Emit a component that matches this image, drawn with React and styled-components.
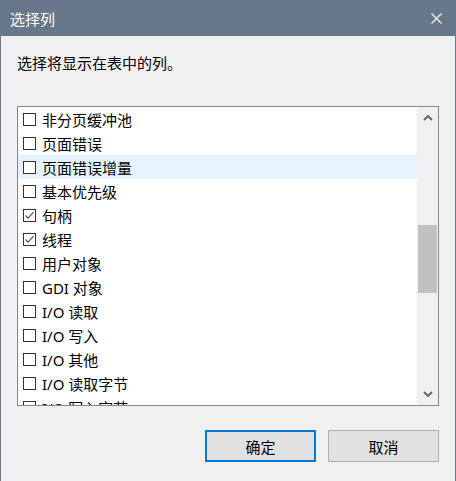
import React from 'react';
import styled, {createGlobalStyle} from 'styled-components';

const GlobalStyle = createGlobalStyle`
  html, body {
    margin: 0;
    padding: 0;
    background: #f0f0f0;
  }
  * {
    box-sizing: border-box;
  }
`;

const Dialog = styled.div`
  width: 456px;
  height: 481px;
  display: flex;
  flex-direction: column;
  background: #f0f0f0;
  border-left: 1px solid #68778a;
  border-right: 1px solid #68778a;
  font-family: "Noto Sans", "Noto Sans CJK SC", sans-serif;
  color: #000;
`;

const TitleBar = styled.div`
  height: 36px;
  flex-shrink: 0;
  display: flex;
  align-items: center;
  justify-content: space-between;
  margin: 0 -1px;
  padding: 0 14px 0 10px;
  background: #68778a;
  color: #fff;
  font-size: 15px;
`;

const CloseButton = styled.div`
  width: 12px;
  height: 12px;
  display: flex;
  align-items: center;
  justify-content: center;
`;

const Body = styled.div`
  flex: 1;
  display: flex;
  flex-direction: column;
  padding: 0 16px;
`;

const Prompt = styled.div`
  margin-top: 17px;
  font-size: 15px;
  line-height: 20px;
`;

const ListBox = styled.div`
  margin-top: 33px;
  height: 300px;
  display: flex;
  background: #fff;
  border: 1px solid #828790;
`;

const Rows = styled.div`
  flex: 1;
  overflow: hidden;
  border-right: 1px solid #e8f0fb;
`;

const Row = styled.div`
  height: 24px;
  display: flex;
  align-items: center;
  padding-left: 5px;
  gap: 6px;
  font-size: 15px;
  background: ${p => (p.$hover ? '#e5f3ff' : 'transparent')};
`;

const Box = styled.div`
  width: 13px;
  height: 13px;
  flex-shrink: 0;
  border: 1px solid #333;
  background: #fff;
  display: flex;
  align-items: center;
  justify-content: center;
`;

const ScrollBar = styled.div`
  width: 20px;
  display: flex;
  flex-direction: column;
  background: #f0f0f0;
`;

const Arrow = styled.div`
  height: 22px;
  display: flex;
  align-items: center;
  justify-content: center;
`;

const Track = styled.div`
  flex: 1;
  padding: 96px 1px 0 0;
`;

const Thumb = styled.div`
  height: 68px;
  background: #c1c1c1;
`;

const Footer = styled.div`
  display: flex;
  justify-content: flex-end;
  gap: 12px;
  margin-top: 24px;
`;

const Button = styled.div`
  width: 111px;
  height: 32px;
  display: flex;
  align-items: center;
  justify-content: center;
  font-size: 15px;
  background: #e1e1e1;
  border: ${p => (p.$primary ? '2px solid #0078d7' : '1px solid #adadad')};
`;

const items = [
  {label: '非分页缓冲池'},
  {label: '页面错误'},
  {label: '页面错误增量', hover: true},
  {label: '基本优先级'},
  {label: '句柄', checked: true},
  {label: '线程', checked: true},
  {label: '用户对象'},
  {label: 'GDI 对象'},
  {label: 'I/O 读取'},
  {label: 'I/O 写入'},
  {label: 'I/O 其他'},
  {label: 'I/O 读取字节'},
  {label: 'I/O 写入字节'}
];

const Check = () => (
  <svg width="11" height="11" viewBox="0 0 11 11">
    <path d="M1.5 5.5 L4.2 8.2 L9.5 2.2" fill="none" stroke="#555" strokeWidth="1.2"/>
  </svg>
);

const Chevron = ({down}) => (
  <svg width="10" height="6" viewBox="0 0 10 6">
    <path
      d={down ? 'M1 1 L5 5 L9 1' : 'M1 5 L5 1 L9 5'}
      fill="none"
      stroke="#606060"
      strokeWidth="1.8"/>
  </svg>
);

const App = () => (
  <>
    <GlobalStyle/>
    <Dialog>
      <TitleBar>
        <span>选择列</span>
        <CloseButton>
          <svg width="11" height="11" viewBox="0 0 11 11">
            <path d="M0.5 0.5 L10.5 10.5 M10.5 0.5 L0.5 10.5" stroke="#fff" strokeWidth="1.1"/>
          </svg>
        </CloseButton>
      </TitleBar>
      <Body>
        <Prompt>选择将显示在表中的列。</Prompt>
        <ListBox>
          <Rows>
            {items.map(item => (
              <Row key={item.label} $hover={item.hover}>
                <Box>{item.checked && <Check/>}</Box>
                <span>{item.label}</span>
              </Row>
            ))}
          </Rows>
          <ScrollBar>
            <Arrow><Chevron/></Arrow>
            <Track><Thumb/></Track>
            <Arrow><Chevron down/></Arrow>
          </ScrollBar>
        </ListBox>
        <Footer>
          <Button $primary>确定</Button>
          <Button>取消</Button>
        </Footer>
      </Body>
    </Dialog>
  </>
);

export default App;
